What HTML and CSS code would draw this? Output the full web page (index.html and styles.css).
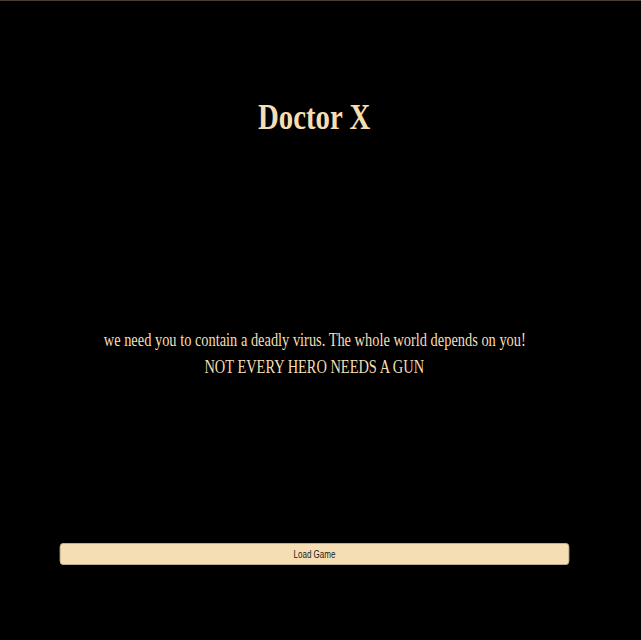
FILE: index.html
```html
<!DOCTYPE html>
<html lang="en">
<head>
<meta charset="utf-8">
<title>Doctor X</title>
<link rel="stylesheet" href="styles.css">
</head>
<body>
<div class="page">
  <h1 class="title">Doctor X</h1>
  <div class="intro">
    <p class="line">we need you to contain a deadly virus. The whole world depends on you!</p>
    <p class="tagline">NOT EVERY HERO NEEDS A GUN</p>
  </div>
  <button class="load">Load Game</button>
</div>
</body>
</html>
```
FILE: styles.css
```css
html, body {
  margin: 0;
  padding: 0;
  background: #000;
}
body {
  border-top: 1px solid #4a4036;
  height: 639px;
  overflow: hidden;
}
.page {
  width: 629px;
  display: flex;
  flex-direction: column;
  align-items: center;
  font-family: "Liberation Serif", "Times New Roman", serif;
  color: #f5deb3;
}
.title, .line, .tagline, .load {
  transform: scaleX(0.8);
}
.title {
  margin: 96px 0 0;
  font-size: 36px;
  font-weight: bold;
  line-height: 40px;
}
.intro {
  margin-top: 193px;
  display: flex;
  flex-direction: column;
  align-items: center;
}
.line, .tagline {
  margin: 0;
  font-size: 18px;
  line-height: 21px;
}
.tagline {
  margin-top: 6px;
}
.load {
  margin-top: 165px;
  width: 637px;
  height: 22px;
  padding: 0;
  background: #f5deb3;
  border: 1px solid #c9b48d;
  border-radius: 4px;
  font-family: "Liberation Sans", Arial, sans-serif;
  font-size: 10px;
  color: #222;
}
```
